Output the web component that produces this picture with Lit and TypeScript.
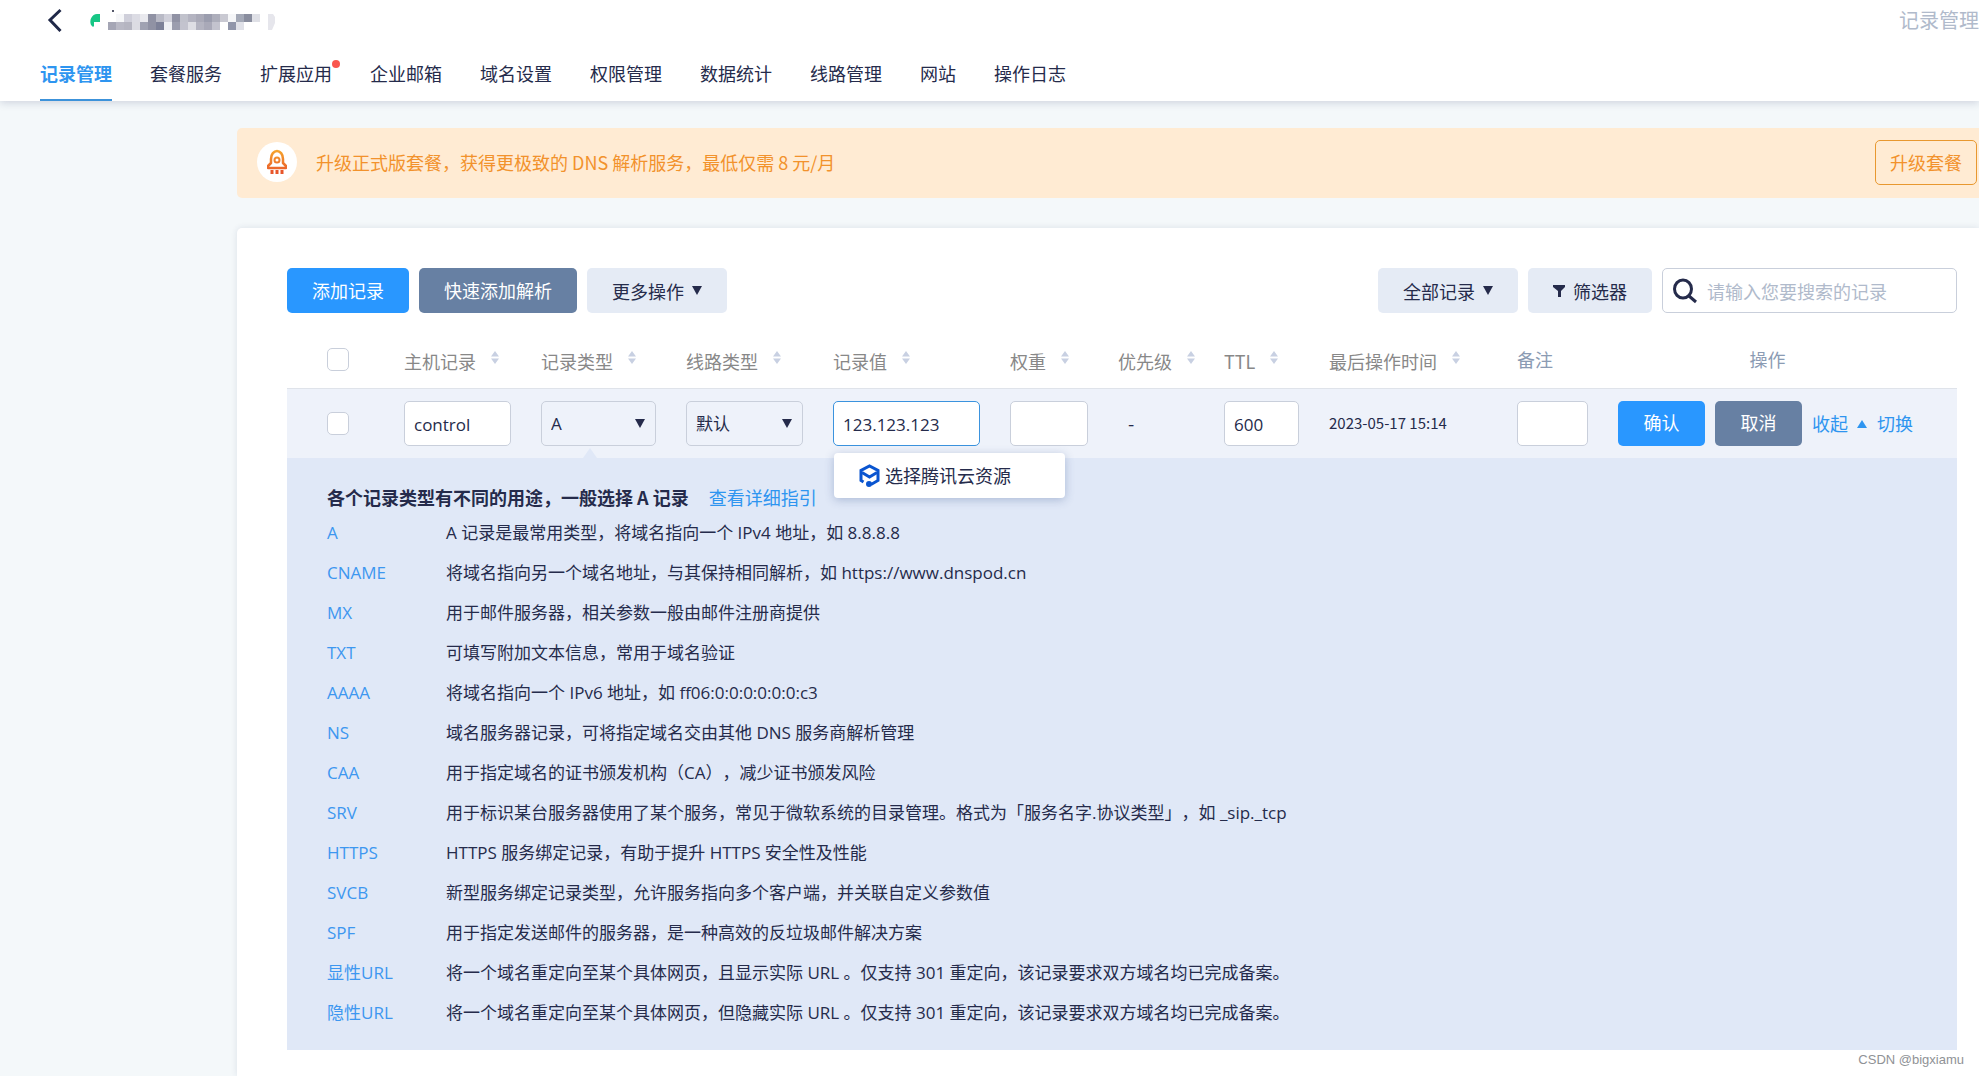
import { LitElement, html, css, svg } from "lit";
import { customElement } from "lit/decorators.js";

interface Column {
  label: string;
  sortable: boolean;
  kind?: string;
}

const TABS = ["记录管理", "套餐服务", "扩展应用", "企业邮箱", "域名设置", "权限管理", "数据统计", "线路管理", "网站", "操作日志"];

const COLUMNS: Column[] = [
  { label: "主机记录", sortable: true },
  { label: "记录类型", sortable: true },
  { label: "线路类型", sortable: true },
  { label: "记录值", sortable: true },
  { label: "权重", sortable: true },
  { label: "优先级", sortable: true },
  { label: "TTL", sortable: true },
  { label: "最后操作时间", sortable: true },
  { label: "备注", sortable: false },
  { label: "操作", sortable: false, kind: "actions-head" },
];

const TYPES: [string, string][] = [
  ["A", "A 记录是最常用类型，将域名指向一个 IPv4 地址，如 8.8.8.8"],
  ["CNAME", "将域名指向另一个域名地址，与其保持相同解析，如 https://www.dnspod.cn"],
  ["MX", "用于邮件服务器，相关参数一般由邮件注册商提供"],
  ["TXT", "可填写附加文本信息，常用于域名验证"],
  ["AAAA", "将域名指向一个 IPv6 地址，如 ff06:0:0:0:0:0:0:c3"],
  ["NS", "域名服务器记录，可将指定域名交由其他 DNS 服务商解析管理"],
  ["CAA", "用于指定域名的证书颁发机构（CA），减少证书颁发风险"],
  ["SRV", "用于标识某台服务器使用了某个服务，常见于微软系统的目录管理。格式为「服务名字.协议类型」，如 _sip._tcp"],
  ["HTTPS", "HTTPS 服务绑定记录，有助于提升 HTTPS 安全性及性能"],
  ["SVCB", "新型服务绑定记录类型，允许服务指向多个客户端，并关联自定义参数值"],
  ["SPF", "用于指定发送邮件的服务器，是一种高效的反垃圾邮件解决方案"],
  ["显性URL", "将一个域名重定向至某个具体网页，且显示实际 URL 。仅支持 301 重定向，该记录要求双方域名均已完成备案。"],
  ["隐性URL", "将一个域名重定向至某个具体网页，但隐藏实际 URL 。仅支持 301 重定向，该记录要求双方域名均已完成备案。"],
];

/* Two rows of tiles that mask the domain name. */
const MASK_ROWS = [
  ["", "#f5f6f8", "#cfcfda", "#dcdce4", "#e9e9ee", "#9092a4", "#b9bac6", "#d0d0da", "#9092a4", "#c1c2cc", "#b4b4c1", "#aaaab8", "#9b9dae", "#adaebb", "#c9c9d2", "#f5f6f8", "#a4a9b7", "#898d9e", "#dfe0e6"],
  ["#a5a6b5", "#b9b9c5", "#b5b5c1", "#dcdce3", "#a0a2b2", "#9092a4", "#7d8198", "#eff0f4", "#9b9dae", "#c3c3ce", "#dedee4", "#b4b4c1", "#a9a9b8", "#c3c3ce", "", "#9196aa", "#e0e1e8", "", ""],
];

@customElement("app-root")
export class AppRoot extends LitElement {
  static styles = css`
    :host {
      display: flex;
      flex-direction: column;
      min-height: 100vh;
      position: relative;
      overflow: hidden;
      background: #f4f8fa;
      color: #252b4b;
      font-family: "Noto Sans CJK SC", sans-serif;
      font-size: 18px;
      line-height: 30px;
      text-spacing-trim: space-all;
    }
    *, *::before { box-sizing: border-box; }
    button, input, select { font: inherit; color: inherit; margin: 0; }
    button { cursor: pointer; border: 0; padding: 0; }
    a { color: #2e95f0; text-decoration: none; }
    svg { display: block; flex: none; }

    .header {
      background: #fff;
      height: 101px;
      display: flex;
      flex-direction: column;
      justify-content: space-between;
      box-shadow: 0 2px 8px rgba(40, 50, 100, 0.18);
      position: relative;
    }
    .title-row { display: flex; align-items: center; height: 40px; padding-left: 46px; }
    .back { background: none; }
    .domain { margin-left: 25px; }
    .crumb { margin-left: auto; font-size: 20px; color: #b0bacb; white-space: nowrap; }
    .tabs { display: flex; gap: 38px; padding-left: 40px; }
    .tab {
      color: #252b4b;
      height: 50px;
      line-height: 45px;
      border-bottom: 2px solid transparent;
      white-space: nowrap;
      position: relative;
    }
    .tab.active { color: #2e95f0; font-weight: 700; border-bottom-color: #3c92da; }
    .dot::after {
      content: "";
      position: absolute;
      top: 9px;
      right: -8px;
      width: 8px;
      height: 8px;
      border-radius: 50%;
      background: #f9564f;
    }

    .main { flex: 1; display: flex; flex-direction: column; gap: 30px; padding: 27px 0 0 237px; }
    .banner {
      display: flex;
      align-items: center;
      height: 70px;
      padding: 0 2px 2px 20px;
      background: #ffebd3;
      border-radius: 5px 0 0 5px;
      color: #f2922c;
    }
    .banner-icon {
      width: 40px;
      height: 40px;
      border-radius: 50%;
      background: #fff;
      display: grid;
      place-items: center;
      margin-right: 19px;
    }
    .upgrade {
      margin-left: auto;
      width: 102px;
      height: 45px;
      border: 1px solid #e8982f;
      border-radius: 5px;
      background: transparent;
      color: #f2922c;
    }

    .card {
      flex: 1;
      background: #fff;
      padding: 40px 22px 26px 50px;
      border-radius: 5px 0 0 0;
      box-shadow: 0 0 6px rgba(40, 60, 100, 0.12);
    }
    .toolbar { display: flex; gap: 10px; height: 45px; }
    .btn {
      height: 45px;
      border-radius: 5px;
      display: flex;
      align-items: center;
      justify-content: center;
      gap: 8px;
      padding: 0 25px;
      background: #e5ebf5;
      white-space: nowrap;
    }
    .primary, .slate { color: #fff; padding-bottom: 2px; }
    .primary { background: #2997ff; }
    .slate { background: #6780a3; }
    .push { margin-left: auto; }
    .search {
      display: flex;
      align-items: center;
      gap: 10px;
      width: 295px;
      padding: 0 10px;
      border: 1px solid #c9cfdb;
      border-radius: 5px;
    }
    .search-input { flex: 1; min-width: 0; border: 0; outline: 0; background: none; padding: 0; }
    .search-input::placeholder { color: #b0bacb; opacity: 1; }

    .records { width: 100%; border-collapse: collapse; table-layout: fixed; }
    .c-check { width: 117px; }
    .c-host { width: 137px; }
    .c-type { width: 145px; }
    .c-line { width: 147px; }
    .c-value { width: 177px; }
    .c-weight { width: 108px; }
    .c-prio { width: 106px; }
    .c-ttl { width: 105px; }
    .c-time { width: 188px; }
    .c-note { width: 101px; }
    th { height: 75px; padding: 18px 0 0; font-weight: 400; text-align: left; color: #8b9bb3; white-space: nowrap; }
    .sort { display: flex; gap: 15px; align-items: flex-start; color: #888; padding: 4px 0 0; background: none; }
    .sort svg { margin-top: 5px; }
    .actions-head { text-align: center; padding-right: 40px; }
    .edit-row { background: #eef2fa; border-top: 1px solid #dfe3ea; }
    .edit-row td { height: 70px; padding: 0 30px 0 0; position: relative; white-space: nowrap; }
    .records .check-cell { padding-left: 40px; }
    .check {
      appearance: none;
      display: block;
      width: 22px;
      height: 23px;
      border: 1px solid #c9cfdb;
      border-radius: 5px;
      background: #fff;
    }
    .field {
      display: block;
      width: 100%;
      height: 45px;
      border: 1px solid #c9cfdb;
      border-radius: 5px;
      padding: 2px 9px 0;
      background: #fff;
      outline: 0;
    }
    .field, .types { font-family: "Open Sans", "Noto Sans CJK SC", sans-serif; font-size: 17px; }
    .focused { border-color: #3b93de; }
    .select-box { display: grid; align-items: center; }
    .select { grid-area: 1 / 1; appearance: none; background: transparent; }
    .select-box svg { grid-area: 1 / 1; justify-self: end; margin-right: 11px; pointer-events: none; }
    .edit-row .dash { padding-left: 10px; }
    .edit-row .time { font-size: 15px; padding: 0; }
    .edit-row .actions-cell { padding: 0; }
    .actions { display: flex; align-items: center; gap: 10px; }
    .act { width: 87px; }
    .collapse { display: flex; align-items: center; gap: 9px; }

    .pointer { position: absolute; left: 42px; bottom: 0; }
    .popup {
      position: absolute;
      z-index: 2;
      top: 64px;
      left: 1px;
      width: 231px;
      height: 45px;
      padding: 0 25px;
      display: flex;
      align-items: center;
      gap: 5px;
      background: #fff;
      border-radius: 4px;
      box-shadow: 0 2px 10px rgba(50, 80, 140, 0.3);
    }

    .guide-cell { background: #e0e8f7; padding: 25px 40px 17px; }
    .guide-title { display: flex; gap: 20px; margin: 0 0 2px; font-size: 18px; line-height: 28px; font-weight: 700; }
    .guide-link { font-weight: 400; }
    .types { display: grid; grid-template-columns: 119px 1fr; margin: 0; line-height: 40px; }
    .types dt { color: #3d97f0; }
    .types dd { margin: 0; }

    .watermark {
      position: absolute;
      right: 15px;
      bottom: 6px;
      font: 13px/20px "Liberation Sans", sans-serif;
      color: #8f9296;
    }
  `;

  private caret(up = false, color = "#252b4b") {
    return html`<svg width="10" height="9" viewBox="0 0 10 9" aria-hidden="true">
      <path d=${up ? "M0 9 5 1l5 8z" : "M0 0h10L5 9z"} fill=${color} />
    </svg>`;
  }

  private sortIcon() {
    return html`<svg width="8" height="14" viewBox="0 0 8 14" aria-hidden="true">
      <path d="M4 0l4 5.500H0zM4 13 0 7.500h8z" fill="#c8d0e2" />
    </svg>`;
  }

  render() {
    return html`
      <header class="header">
        <div class="title-row">
          <button class="back" aria-label="返回">
            <svg width="18" height="26" viewBox="0 0 18 26"><path d="M14.500 3 4 13l10.500 11" fill="none" stroke="#202848" stroke-width="3" /></svg>
          </button>
          <svg class="domain" width="188" height="20" viewBox="0 0 188 20" aria-hidden="true">
            <path d="M11 4v8H5v4L4 17 2 15C0 10 3 4 8 4z" fill="#17c685" />
            ${MASK_ROWS.map((row, r) =>
              row.map((fill, i) => (fill ? svg`<rect x=${19 + i * 8} y=${4 + r * 8} width="8" height="8" fill=${fill} />` : "")),
            )}
            <path d="M179 4h5l2 3v6l-3 7h-4z" fill="#e6e6ec" />
            <rect x="23" y="0" width="2" height="2" fill="#55586a" />
          </svg>
          <span class="crumb">记录管理</span>
        </div>
        <nav class="tabs">
          ${TABS.map((t, i) => html`<a href="#" class="tab ${i === 0 ? "active" : ""} ${i === 2 ? "dot" : ""}">${t}</a>`)}
        </nav>
      </header>

      <main class="main">
        <section class="banner">
          <span class="banner-icon">
            <svg width="20" height="26" viewBox="0 0 20 26" fill="none" stroke-width="2">
              <defs>
                <linearGradient id="flame" x1="0" y1="0" x2="0" y2="26" gradientUnits="userSpaceOnUse">
                  <stop offset="0" stop-color="#f6a92c" /><stop offset="1" stop-color="#e8502a" />
                </linearGradient>
              </defs>
              <path d="M4 14V10c0-5 3-8 6-8s6 3 6 8v4l3 3v2H1v-2z" stroke="url(#flame)" stroke-width="2.500" stroke-linejoin="round" />
              <circle cx="10" cy="11" r="2.500" stroke="url(#flame)" />
              <path d="M5 21v4M10 21v4M15 21v4" stroke="#e8562a" stroke-width="3" />
            </svg>
          </span>
          <span>升级正式版套餐，获得更极致的 DNS 解析服务，最低仅需 8 元/月</span>
          <button class="upgrade">升级套餐</button>
        </section>

        <section class="card">
          <div class="toolbar">
            <button class="btn primary">添加记录</button>
            <button class="btn slate">快速添加解析</button>
            <button class="btn">更多操作 ${this.caret()}</button>
            <button class="btn push">全部记录 ${this.caret()}</button>
            <button class="btn">
              <svg width="12" height="12" viewBox="0 0 12 12"><path d="M0 0h12v2L8 6v6H5V6L0 2z" fill="#252b4b" /></svg>
              筛选器
            </button>
            <label class="search">
              <svg width="24" height="26" viewBox="0 0 24 26" fill="none" stroke="#252b4b" stroke-width="3">
                <ellipse cx="10" cy="11" rx="8.500" ry="9" /><path d="m16 18 7 6" />
              </svg>
              <input class="search-input" type="text" aria-label="搜索记录" placeholder="请输入您要搜索的记录" />
            </label>
          </div>

          <table class="records">
            <colgroup>
              <col class="c-check" /><col class="c-host" /><col class="c-type" /><col class="c-line" />
              <col class="c-value" /><col class="c-weight" /><col class="c-prio" /><col class="c-ttl" />
              <col class="c-time" /><col class="c-note" /><col />
            </colgroup>
            <thead>
              <tr>
                <th class="check-cell"><input class="check" type="checkbox" aria-label="全选" /></th>
                ${COLUMNS.map(
                  (c) => html`<th class=${c.kind ?? ""}>
                    ${c.sortable ? html`<button class="sort">${c.label}${this.sortIcon()}</button>` : c.label}
                  </th>`,
                )}
              </tr>
            </thead>
            <tbody>
              <tr class="edit-row">
                <td class="check-cell"><input class="check" type="checkbox" aria-label="选择记录" /></td>
                <td><input class="field" type="text" aria-label="主机记录" .value=${"control"} /></td>
                <td>
                  <div class="select-box">
                    <select class="field select" aria-label="记录类型">${TYPES.map(([t]) => html`<option>${t}</option>`)}</select>
                    ${this.caret()}
                  </div>
                  <svg class="pointer" width="14" height="10" viewBox="0 0 14 10"><path d="M0 10 7 0l7 10z" fill="#e0e8f7" /></svg>
                </td>
                <td>
                  <div class="select-box">
                    <select class="field select" aria-label="线路类型"><option>默认</option></select>
                    ${this.caret()}
                  </div>
                </td>
                <td>
                  <input class="field focused" type="text" aria-label="记录值" .value=${"123.123.123"} />
                  <button class="popup">
                    <svg width="21" height="23" viewBox="0 0 21 23" fill="none" stroke="#0a55d0" stroke-width="3">
                      <path d="M4.500 18 2 16.500v-10L10.500 2 19 6.500v10l-7 4" />
                      <path d="m3 8.500 7.500 4.500L18 8.500" />
                      <circle cx="10" cy="20" r="1.500" />
                    </svg>
                    选择腾讯云资源
                  </button>
                </td>
                <td><input class="field" type="text" aria-label="权重" /></td>
                <td class="dash">-</td>
                <td><input class="field" type="text" aria-label="TTL" .value=${"600"} /></td>
                <td class="time">2023-05-17 15:14</td>
                <td><input class="field" type="text" aria-label="备注" /></td>
                <td class="actions-cell">
                  <div class="actions">
                    <button class="btn primary act">确认</button>
                    <button class="btn slate act">取消</button>
                    <a href="#" class="collapse">收起 ${this.caret(true, "#2e95f0")}</a>
                    <a href="#">切换</a>
                  </div>
                </td>
              </tr>
              <tr>
                <td class="guide-cell" colspan="11">
                  <h2 class="guide-title">各个记录类型有不同的用途，一般选择 A 记录 <a class="guide-link" href="#">查看详细指引</a></h2>
                  <dl class="types">${TYPES.map(([t, d]) => html`<dt>${t}</dt><dd>${d}</dd>`)}</dl>
                </td>
              </tr>
            </tbody>
          </table>
        </section>
      </main>
      <span class="watermark">CSDN @bigxiamu</span>
    `;
  }
}
